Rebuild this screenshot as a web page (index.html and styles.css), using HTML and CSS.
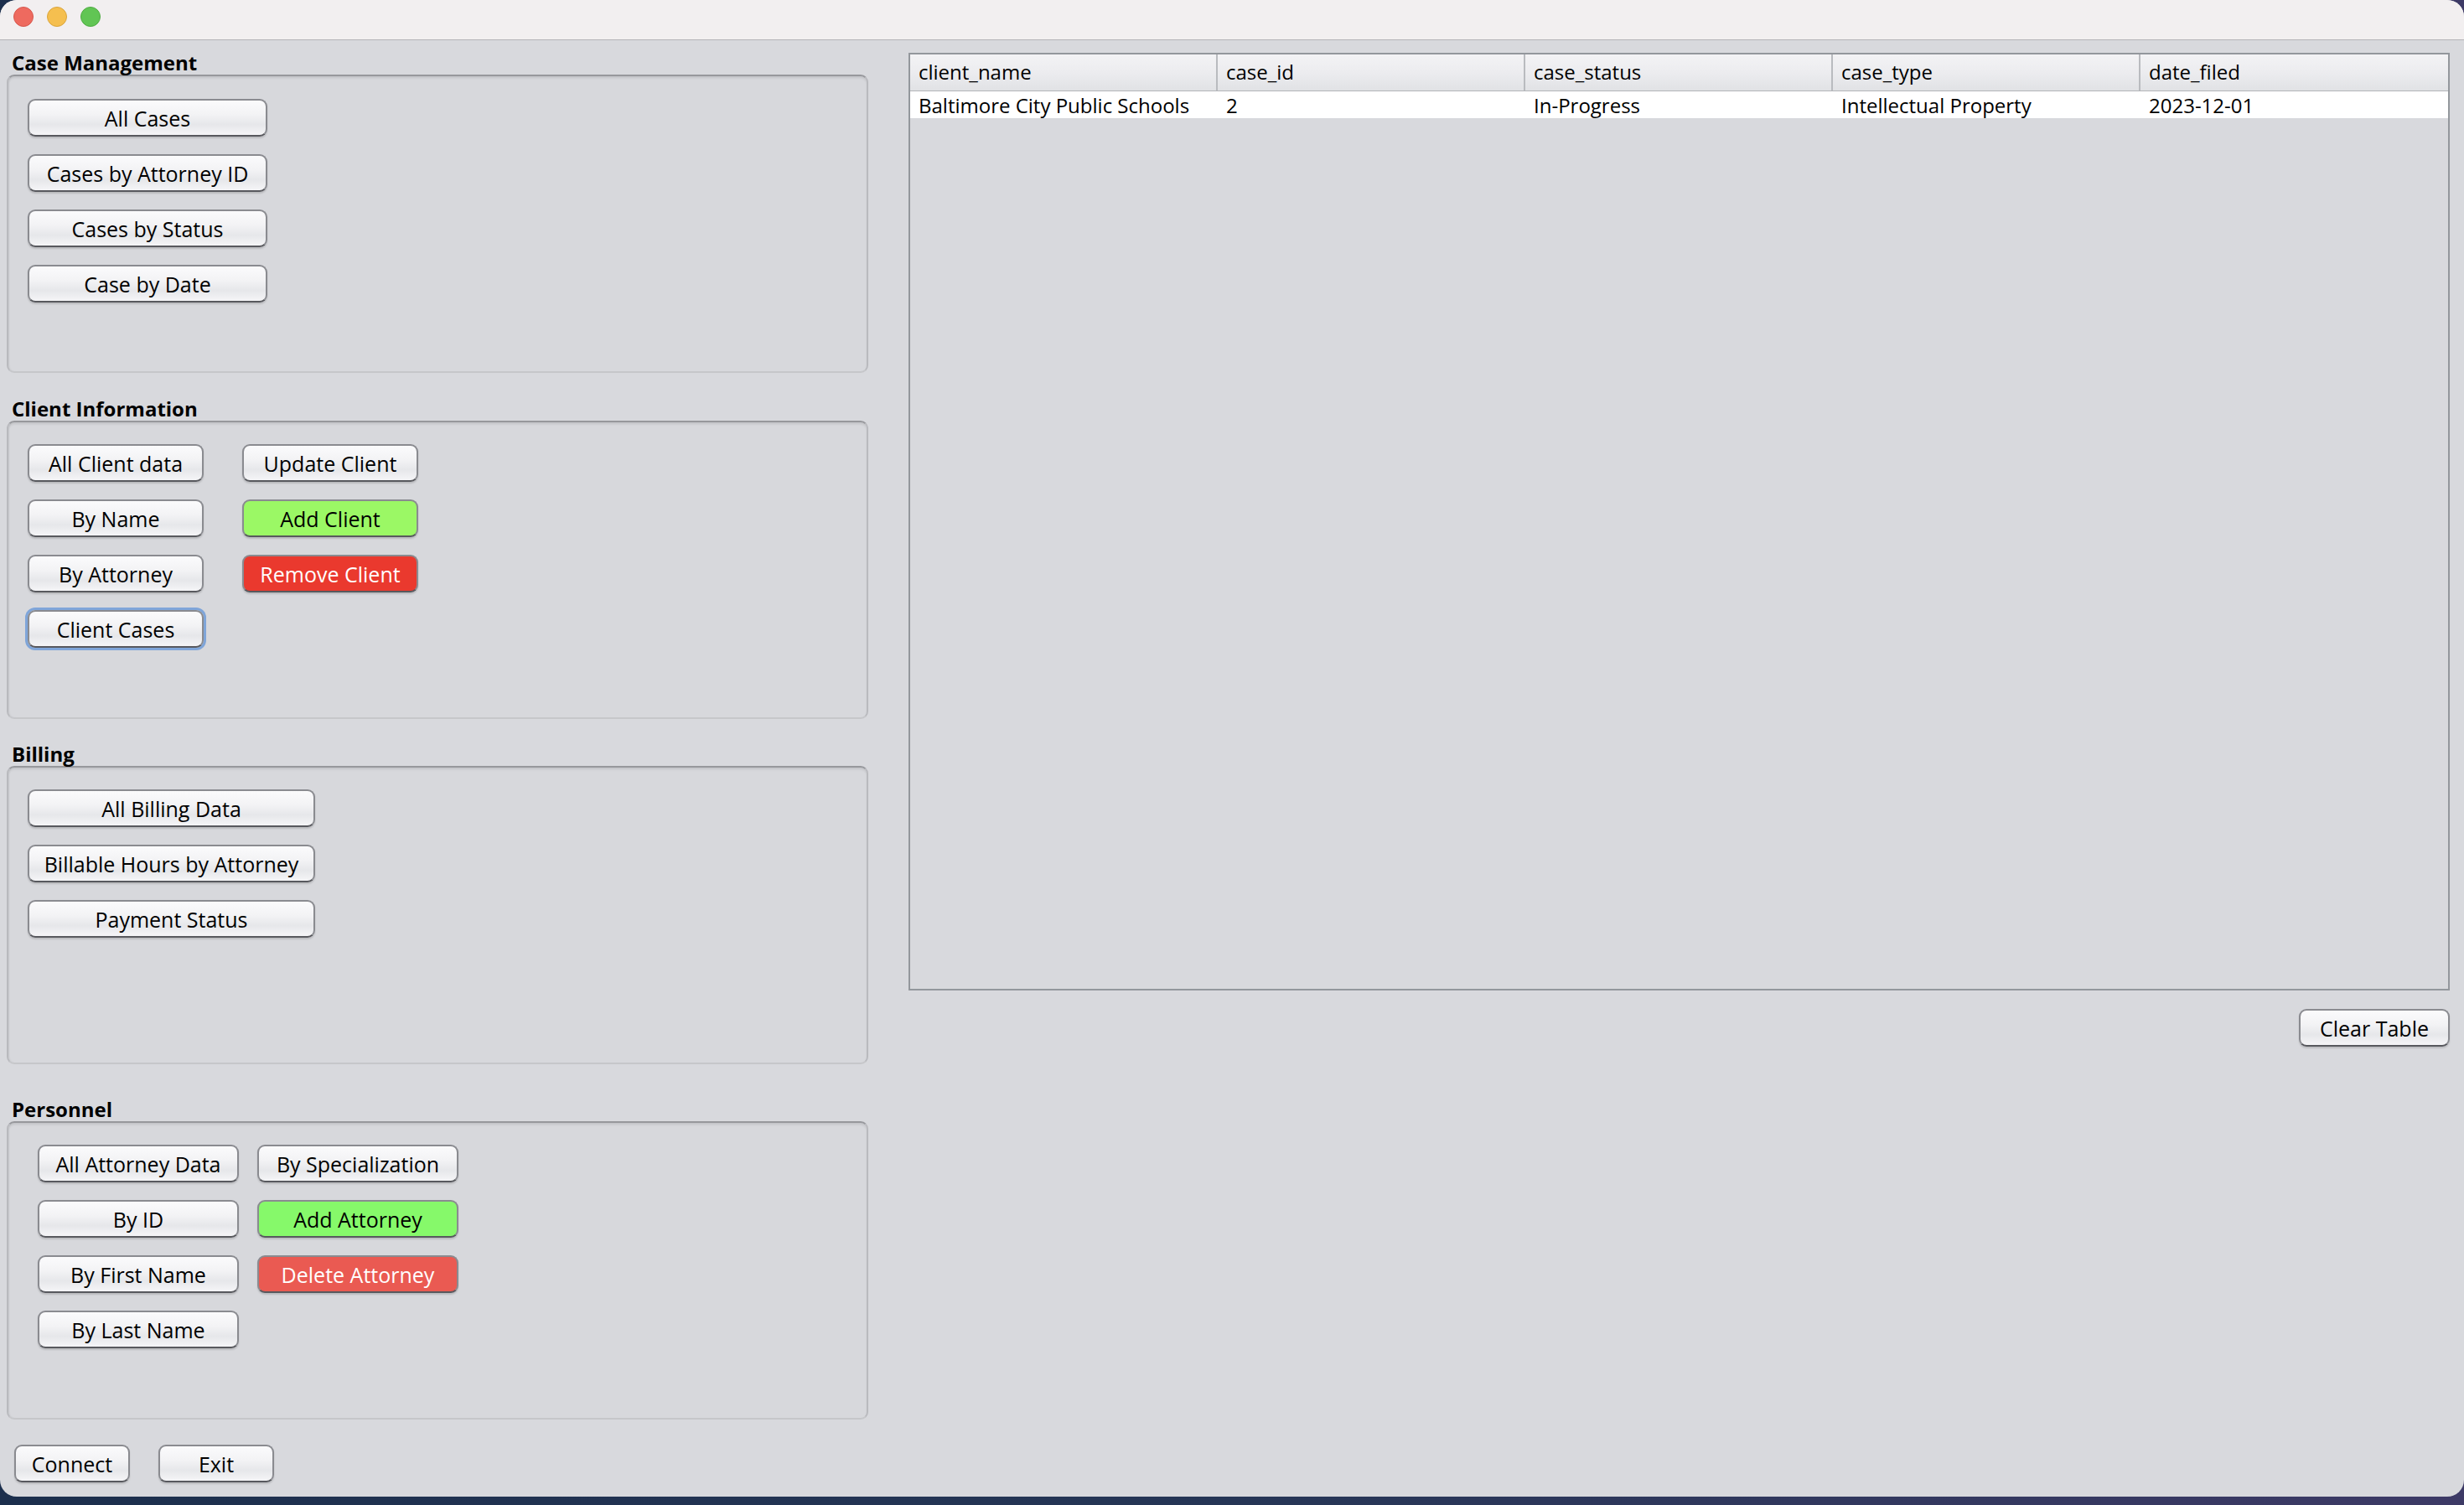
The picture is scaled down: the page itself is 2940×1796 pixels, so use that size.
FILE: index.html
```html
<!DOCTYPE html>
<html>
<head>
<meta charset="utf-8">
<link rel="stylesheet" href="styles.css">
</head>
<body>
<div class="window">
  <div class="titlebar">
    <span class="light red"></span>
    <span class="light yellow"></span>
    <span class="light green"></span>
  </div>
  <div class="content">
    <div class="left">
      <section class="group g1">
        <div class="group-title">Case Management</div>
        <div class="group-box pad-a">
          <div class="stack">
            <button class="btn w286">All Cases</button>
            <button class="btn w286">Cases by Attorney ID</button>
            <button class="btn w286">Cases by Status</button>
            <button class="btn w286">Case by Date</button>
          </div>
        </div>
      </section>
      <section class="group g2">
        <div class="group-title">Client Information</div>
        <div class="group-box pad-a">
          <div class="cols gap46">
            <div class="stack">
              <button class="btn w210">All Client data</button>
              <button class="btn w210">By Name</button>
              <button class="btn w210">By Attorney</button>
              <button class="btn w210 focused">Client Cases</button>
            </div>
            <div class="stack">
              <button class="btn w210">Update Client</button>
              <button class="btn w210 btn-green">Add Client</button>
              <button class="btn w210 btn-red">Remove Client</button>
            </div>
          </div>
        </div>
      </section>
      <section class="group g3">
        <div class="group-title">Billing</div>
        <div class="group-box pad-a">
          <div class="stack">
            <button class="btn w343">All Billing Data</button>
            <button class="btn w343">Billable Hours by Attorney</button>
            <button class="btn w343">Payment Status</button>
          </div>
        </div>
      </section>
      <section class="group g4">
        <div class="group-title">Personnel</div>
        <div class="group-box pad-b">
          <div class="cols gap22">
            <div class="stack">
              <button class="btn w240">All Attorney Data</button>
              <button class="btn w240">By ID</button>
              <button class="btn w240">By First Name</button>
              <button class="btn w240">By Last Name</button>
            </div>
            <div class="stack">
              <button class="btn w240">By Specialization</button>
              <button class="btn w240 btn-green2">Add Attorney</button>
              <button class="btn w240 btn-red2">Delete Attorney</button>
            </div>
          </div>
        </div>
      </section>
      <div class="bottom-row">
        <button class="btn w138">Connect</button>
        <button class="btn w138">Exit</button>
      </div>
    </div>
    <div class="right">
      <div class="table-pane">
        <div class="thead">
          <div class="th">client_name</div>
          <div class="th">case_id</div>
          <div class="th">case_status</div>
          <div class="th">case_type</div>
          <div class="th last">date_filed</div>
        </div>
        <div class="trow">
          <div class="td">Baltimore City Public Schools</div>
          <div class="td">2</div>
          <div class="td">In-Progress</div>
          <div class="td">Intellectual Property</div>
          <div class="td">2023-12-01</div>
        </div>
      </div>
      <div class="table-actions">
        <button class="btn w180">Clear Table</button>
      </div>
    </div>
  </div>
</div>
</body>
</html>
```

FILE: styles.css
```css
html, body {
  margin: 0;
  padding: 0;
}
body {
  width: 2940px;
  height: 1796px;
  overflow: hidden;
  background: linear-gradient(90deg, #1c2f4d 0%, #263656 50%, #3d3a66 100%);
  font-family: "Open Sans", "Noto Sans", sans-serif;
  color: #000;
}
.window {
  height: 1786px;
  background: #d8d9dd;
  border-radius: 20px;
  overflow: hidden;
  display: flex;
  flex-direction: column;
}
.titlebar {
  height: 48px;
  flex: none;
  background: #f2eff0;
  border-bottom: 1px solid #b3b3b7;
  display: flex;
  align-items: flex-start;
  padding: 8px 0 0 16px;
  box-sizing: border-box;
  gap: 16px;
}
.light {
  width: 24px;
  height: 24px;
  border-radius: 50%;
  box-sizing: border-box;
}
.light.red { background: #ee6a5f; border: 1px solid #d5574d; }
.light.yellow { background: #f5bf4f; border: 1px solid #d9a43c; }
.light.green { background: #61c554; border: 1px solid #4fab43; }

.content {
  display: flex;
  padding-left: 8px;
}
.left {
  width: 1028px;
  flex: none;
  display: flex;
  flex-direction: column;
}
.group-title {
  font-weight: 700;
  font-size: 24px;
  line-height: 30px;
  height: 32px;
  box-sizing: border-box;
  padding: 3px 0 0 6px;
}
.g1 { margin-top: 9px; }
.g2 { margin-top: 25px; }
.g3 { margin-top: 24px; }
.g4 { margin-top: 36px; }
.group-box {
  height: 356px;
  box-sizing: border-box;
  border: 2px solid #b9babe;
  border-top-color: #97989c;
  border-bottom-color: #c6c7ca;
  border-radius: 9px;
  box-shadow: inset 0 3px 3px -1px rgba(0,0,0,0.10), inset 2px 0 2px -1px rgba(0,0,0,0.06);
  background: #d7d8dc;
}
.pad-a { padding: 26px 0 0 23px; }
.pad-b { padding: 26px 0 0 35px; }
.g1 .pad-a { padding-top: 27px; }

.stack {
  display: flex;
  flex-direction: column;
  gap: 21px;
  align-items: flex-start;
}
.cols {
  display: flex;
  align-items: flex-start;
}
.gap46 { gap: 46px; }
.gap22 { gap: 22px; }

.btn {
  height: 45px;
  box-sizing: border-box;
  font-family: "Open Sans", "Noto Sans", sans-serif;
  font-size: 25px;
  line-height: 1;
  color: #000;
  padding: 1px 0 0 0;
  border: 2px solid #8a8b90;
  border-bottom-color: #58595e;
  border-radius: 9px;
  background: linear-gradient(180deg, #fbfbfc 0%, #f3f3f5 40%, #e6e7ea 70%, #f5f5f7 100%);
  box-shadow: 0 2px 2px rgba(0,0,0,0.14);
  display: flex;
  align-items: center;
  justify-content: center;
  white-space: nowrap;
}
.w286 { width: 286px; }
.w210 { width: 210px; }
.w343 { width: 343px; }
.w240 { width: 240px; }
.w138 { width: 138px; }
.w180 { width: 180px; }

.btn-green {
  background: #9bf865;
}
.btn-green2 {
  background: #86f96a;
}
.btn-red {
  background: #ea392e;
  color: #fff;
}
.btn-red2 {
  background: #ea5a52;
  color: #fff;
}
.focused {
  box-shadow: 0 0 0 3px #7fa5d9, 0 2px 2px rgba(0,0,0,0.12);
}

.bottom-row {
  margin-top: 30px;
  padding-left: 9px;
  display: flex;
  gap: 34px;
}

.right {
  margin-left: 48px;
  width: 1839px;
  flex: none;
  padding-top: 15px;
  display: flex;
  flex-direction: column;
}
.table-pane {
  height: 1119px;
  box-sizing: border-box;
  border: 2px solid #93979c;
  background: #d8d9dd;
}
.thead {
  display: grid;
  grid-template-columns: repeat(5, 1fr);
  height: 44px;
  box-sizing: border-box;
  background: linear-gradient(180deg, #f3f3f5 0%, #ececef 50%, #e1e2e5 100%);
  border-bottom: 1px solid #b2b4b8;
}
.th {
  font-size: 24px;
  line-height: 42px;
  padding-left: 10px;
  border-right: 2px solid #b9bbbf;
  white-space: nowrap;
}
.th.last { border-right: none; }
.trow {
  display: grid;
  grid-template-columns: repeat(5, 1fr);
  height: 32px;
  background: #fff;
}
.td {
  font-size: 24px;
  line-height: 34px;
  padding-left: 10px;
  white-space: nowrap;
}
.table-actions {
  margin-top: 22px;
  display: flex;
  justify-content: flex-end;
}
```
